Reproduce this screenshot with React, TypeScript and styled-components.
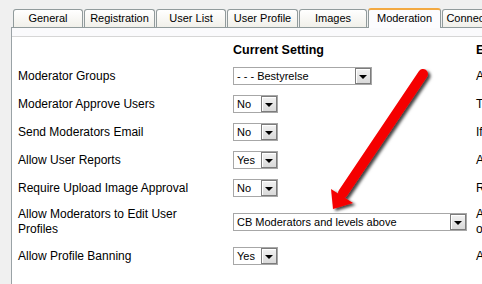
import React from "react"
import styled, { createGlobalStyle } from "styled-components"

const GlobalStyle = createGlobalStyle`
  html, body {
    margin: 0;
    padding: 0;
    background: #f0f0f0;
    overflow: hidden;
  }
  body {
    font-family: "Liberation Sans", Arial, sans-serif;
    color: #000;
  }
`

type Setting = {
  label: string
  value: string
  width: number
  desc: string[]
  tall?: boolean
}

const tabs = [
  { name: "General", width: 70 },
  { name: "Registration", width: 71 },
  { name: "User List", width: 70 },
  { name: "User Profile", width: 71 },
  { name: "Images", width: 68 },
  { name: "Moderation", width: 73, active: true },
  { name: "Connections", width: 70 },
]

const settings: Setting[] = [
  { label: "Moderator Groups", value: "- - - Bestyrelse", width: 139, desc: ["All users in the selected groups and above"] },
  { label: "Moderator Approve Users", value: "No", width: 45, desc: ["This lets moderators approve new users"] },
  { label: "Send Moderators Email", value: "No", width: 45, desc: ["If set, moderators receive system emails"] },
  { label: "Allow User Reports", value: "Yes", width: 45, desc: ["Allows users to report other users"] },
  { label: "Require Upload Image Approval", value: "No", width: 45, desc: ["Require that uploaded images are approved"] },
  {
    label: "Allow Moderators to Edit User Profiles",
    value: "CB Moderators and levels above",
    width: 234,
    desc: ["Allow moderators to edit the profiles", "of users at or below their level"],
    tall: true,
  },
  { label: "Allow Profile Banning", value: "Yes", width: 45, desc: ["Allow moderators to ban user profiles"] },
]

export default function App() {
  return (
    <Page>
      <GlobalStyle />
      <TabBar>
        {tabs.map((t) => (
          <Tab key={t.name} $width={t.width} $active={!!t.active}>
            {t.name}
          </Tab>
        ))}
      </TabBar>
      <Panel>
        <Band />
        <Table>
          <HeaderCell />
          <HeaderCell>Current Setting</HeaderCell>
          <HeaderCell>Explanation</HeaderCell>
          {settings.map((s) => (
            <React.Fragment key={s.label}>
              <Label $tall={!!s.tall}>{s.label}</Label>
              <Cell $tall={!!s.tall}>
                <Select $width={s.width}>
                  <SelectText>{s.value}</SelectText>
                  <DropButton>
                    <Caret />
                  </DropButton>
                </Select>
              </Cell>
              <Desc $tall={!!s.tall}>
                {s.desc.map((d) => (
                  <div key={d}>{d}</div>
                ))}
              </Desc>
            </React.Fragment>
          ))}
        </Table>
      </Panel>
      <Arrow viewBox="0 0 482 284" width="482" height="284">
        <defs>
          <filter id="shadow" x="-20%" y="-20%" width="140%" height="140%">
            <feDropShadow dx="2.5" dy="2" stdDeviation="1.4" floodColor="#000" floodOpacity="0.75" />
          </filter>
        </defs>
        <g filter="url(#shadow)">
          <line x1="423" y1="74" x2="343" y2="193" stroke="#f50000" strokeWidth="10" strokeLinecap="round" />
          <polygon points="333,209 331,189 353,203" fill="#f50000" />
        </g>
      </Arrow>
    </Page>
  )
}

const Page = styled.div`
  position: relative;
  width: 482px;
  height: 284px;
  padding: 7px 0 0 11px;
  box-sizing: border-box;
`

const TabBar = styled.div`
  display: flex;
  align-items: flex-end;
  gap: 1px;
  height: 20px;
  padding-left: 2px;
  white-space: nowrap;
`

const Tab = styled.div<{ $width: number; $active: boolean }>`
  flex: none;
  width: ${(p) => p.$width}px;
  height: ${(p) => (p.$active ? 20 : 18)}px;
  box-sizing: border-box;
  border: 1px solid #919b9c;
  border-bottom: none;
  border-radius: 3px 3px 0 0;
  font-size: 11px;
  line-height: 17px;
  text-align: center;
  overflow: hidden;
  position: relative;
  z-index: ${(p) => (p.$active ? 2 : 1)};
  margin-bottom: ${(p) => (p.$active ? -1 : 0)}px;
  background: ${(p) => (p.$active ? "#fcfcfe" : "linear-gradient(#ffffff, #f1f0ea)")};
  border-top: ${(p) => (p.$active ? "2px solid #f3a941" : "1px solid #919b9c")};
`

const Panel = styled.div`
  width: 720px;
  height: 260px;
  background: #fff;
  border-left: 1px solid #9aa2a6;
  border-top: 1px solid #919b9c;
`

const Band = styled.div`
  height: 8px;
  background: #fafafc;
  border-bottom: 1px solid #d6d6d6;
`

const Table = styled.div`
  display: grid;
  grid-template-columns: 215px 243px 240px;
  padding-left: 6px;
  font-size: 12px;
  line-height: 15px;
`

const HeaderCell = styled.div`
  height: 25px;
  padding-top: 6px;
  box-sizing: border-box;
  font-weight: bold;
  font-size: 12.5px;
  white-space: nowrap;
`

const Label = styled.div<{ $tall: boolean }>`
  height: ${(p) => (p.$tall ? 40 : 28)}px;
  display: flex;
  align-items: center;
  padding-right: 40px;
`

const Cell = styled.div<{ $tall: boolean }>`
  height: ${(p) => (p.$tall ? 40 : 28)}px;
  display: flex;
  align-items: center;
`

const Desc = styled.div<{ $tall: boolean }>`
  height: ${(p) => (p.$tall ? 40 : 28)}px;
  display: flex;
  flex-direction: column;
  justify-content: center;
  white-space: nowrap;
`

const Select = styled.div<{ $width: number }>`
  width: ${(p) => p.$width}px;
  height: 18px;
  box-sizing: border-box;
  border: 1px solid #a7a7a7;
  background: #fff;
  display: flex;
  align-items: center;
`

const SelectText = styled.span`
  flex: 1;
  padding-left: 3px;
  font-size: 11px;
  line-height: 16px;
  white-space: nowrap;
  overflow: hidden;
`

const DropButton = styled.span`
  width: 16px;
  height: 16px;
  box-sizing: border-box;
  border: 1px solid #7c7c7c;
  background: linear-gradient(#f2f2f2, #d9d9d9);
  box-shadow: inset 1px 1px 0 #ffffff;
  display: flex;
  align-items: center;
  justify-content: center;
`

const Caret = styled.span`
  width: 0;
  height: 0;
  margin-top: 2px;
  border-left: 4px solid transparent;
  border-right: 4px solid transparent;
  border-top: 4px solid #000;
`

const Arrow = styled.svg`
  position: absolute;
  top: 0;
  left: 0;
  pointer-events: none;
`
